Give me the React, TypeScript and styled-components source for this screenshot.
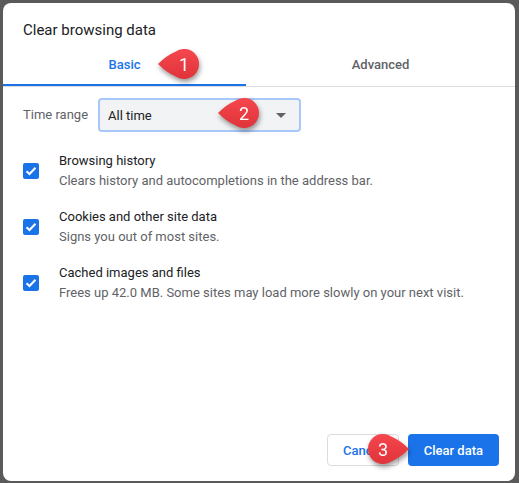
import React, { useId } from "react";
import styled, { createGlobalStyle } from "styled-components";

const GlobalStyle = createGlobalStyle`
  html, body {
    margin: 0;
    padding: 0;
    background: #5a5a5a;
  }
  body {
    font-family: Roboto, "Liberation Sans", Arial, sans-serif;
    -webkit-font-smoothing: antialiased;
  }
  #root {
    width: 519px;
    height: 483px;
  }
`;

const Stage = styled.div`
  position: relative;
  box-sizing: border-box;
  width: 519px;
  height: 483px;
  padding: 3px 4px 2px 3px;
  background: #5a5a5a;
`;

const Dialog = styled.section`
  width: 512px;
  height: 478px;
  background: #ffffff;
  border-radius: 8px;
  display: flex;
  flex-direction: column;
  overflow: hidden;
`;

const Title = styled.h1`
  margin: 0;
  padding: 17px 20px 0;
  font-size: 15px;
  line-height: 20px;
  font-weight: 400;
  color: #202124;
`;

const Tabs = styled.div`
  display: grid;
  grid-template-columns: 243px 1fr;
  border-bottom: 1px solid #dadce0;
`;

const Tab = styled.div<{ $active?: boolean }>`
  padding: 15px 0 9px;
  text-align: center;
  font-size: 13px;
  line-height: 20px;
  font-weight: 500;
  color: ${(p) => (p.$active ? "#1a73e8" : "#5f6368")};
  border-bottom: 2px solid ${(p) => (p.$active ? "#1a73e8" : "transparent")};
`;

const Body = styled.div`
  padding: 11px 20px 0;
`;

const RangeRow = styled.div`
  display: flex;
  align-items: center;
  height: 34px;
`;

const RangeLabel = styled.span`
  width: 75px;
  font-size: 13px;
  line-height: 20px;
  color: #5f6368;
`;

const Select = styled.div`
  box-sizing: border-box;
  width: 203px;
  height: 34px;
  padding: 0 8px 0 8px;
  display: flex;
  align-items: center;
  justify-content: space-between;
  background: #f1f3f4;
  border: 2px solid #a8c7fa;
  border-radius: 4px;
  font-size: 13px;
  color: #202124;
`;

const ArrowIcon = styled.svg`
  width: 10px;
  height: 5px;
  margin-right: 5px;
`;

const OptionList = styled.div`
  margin-top: 11px;
`;

const Option = styled.div`
  display: flex;
  align-items: center;
  gap: 20px;
  padding: 8px 0;
`;

const CheckBox = styled.span`
  flex: none;
  width: 16px;
  height: 16px;
  border-radius: 2px;
  background: #1a73e8;
  display: flex;
  align-items: center;
  justify-content: center;
`;

const OptionText = styled.div`
  display: flex;
  flex-direction: column;
  font-size: 13px;
  line-height: 20px;
`;

const OptionTitle = styled.span`
  color: #202124;
`;

const OptionDesc = styled.span`
  color: #5f6368;
`;

const Footer = styled.div`
  margin-top: auto;
  display: flex;
  justify-content: flex-end;
  gap: 9px;
  padding: 0 16px 15px;
`;

const Button = styled.button<{ $primary?: boolean }>`
  box-sizing: border-box;
  height: 32px;
  padding: 0 ${(p) => (p.$primary ? "16px" : "15px")};
  border-radius: 4px;
  font-family: inherit;
  font-size: 13px;
  font-weight: 500;
  cursor: pointer;
  border: ${(p) => (p.$primary ? "none" : "1px solid #dadce0")};
  background: ${(p) => (p.$primary ? "#1a73e8" : "#ffffff")};
  color: ${(p) => (p.$primary ? "#ffffff" : "#1a73e8")};
`;

const CalloutSvg = styled.svg`
  position: absolute;
  overflow: visible;
  filter: drop-shadow(1px 3px 2.5px rgba(0, 0, 0, 0.4));
`;

type CalloutProps = {
  n: number;
  left: number;
  top: number;
  pointTo: "left" | "right";
};

// Numbered red pin callout: a circle with a tapered point on one side.
function Callout({ n, left, top, pointTo }: CalloutProps) {
  const gid = useId();
  const r = 15;
  const d = 26;
  const pad = 4;
  const cy = 20;
  const dir = pointTo === "left" ? -1 : 1;
  const cx = dir < 0 ? pad + d : pad + r;
  const tipX = cx + dir * d;
  const cos = r / d;
  const sin = Math.sqrt(1 - cos * cos);
  const tx = cx + dir * r * cos;
  const ty = r * sin;
  const sweep = dir < 0 ? 1 : 0;
  // slightly bowed sides give the drop its rounded look
  const bow = 2.5;
  const mx = (tipX + tx) / 2;
  const path = [
    `M ${tipX} ${cy}`,
    `Q ${mx} ${cy - ty / 2 - bow} ${tx} ${cy - ty}`,
    `A ${r} ${r} 0 1 ${sweep} ${tx} ${cy + ty}`,
    `Q ${mx} ${cy + ty / 2 + bow} ${tipX} ${cy}`,
    "Z",
  ].join(" ");
  const width = d + r + pad * 2;
  return (
    <CalloutSvg width={width} height={44} viewBox={`0 0 ${width} 44`} style={{ left, top }}>
      <defs>
        <linearGradient id={gid} x1="0" y1="0" x2="0" y2="1">
          <stop offset="0" stopColor="#f5474d" />
          <stop offset="1" stopColor="#e0333a" />
        </linearGradient>
      </defs>
      <path d={path} fill={`url(#${gid})`} />
      <text
        x={cx}
        y={cy + 6.5}
        textAnchor="middle"
        fill="#ffffff"
        fontSize="18"
        fontFamily="Roboto, 'Liberation Sans', Arial, sans-serif"
      >
        {n}
      </text>
    </CalloutSvg>
  );
}

const options = [
  { title: "Browsing history", desc: "Clears history and autocompletions in the address bar." },
  { title: "Cookies and other site data", desc: "Signs you out of most sites." },
  { title: "Cached images and files", desc: "Frees up 42.0 MB. Some sites may load more slowly on your next visit." },
];

export default function App() {
  return (
    <>
      <GlobalStyle />
      <Stage>
        <Dialog>
          <Title>Clear browsing data</Title>
          <Tabs>
            <Tab $active>Basic</Tab>
            <Tab>Advanced</Tab>
          </Tabs>
          <Body>
            <RangeRow>
              <RangeLabel>Time range</RangeLabel>
              <Select>
                <span>All time</span>
                <ArrowIcon viewBox="0 0 10 5">
                  <path d="M0 0 L10 0 L5 5 Z" fill="#5f6368" />
                </ArrowIcon>
              </Select>
            </RangeRow>
            <OptionList>
              {options.map((o) => (
                <Option key={o.title}>
                  <CheckBox>
                    <svg width="12" height="10" viewBox="0 0 12 10">
                      <path d="M1.5 5.2 L4.5 8 L10.5 1.8" fill="none" stroke="#fff" strokeWidth="2" />
                    </svg>
                  </CheckBox>
                  <OptionText>
                    <OptionTitle>{o.title}</OptionTitle>
                    <OptionDesc>{o.desc}</OptionDesc>
                  </OptionText>
                </Option>
              ))}
            </OptionList>
          </Body>
          <Footer>
            <Button>Cancel</Button>
            <Button $primary>Clear data</Button>
          </Footer>
        </Dialog>
        <Callout n={1} left={154} top={44} pointTo="left" />
        <Callout n={2} left={214} top={93} pointTo="left" />
        <Callout n={3} left={364} top={429} pointTo="right" />
      </Stage>
    </>
  );
}
